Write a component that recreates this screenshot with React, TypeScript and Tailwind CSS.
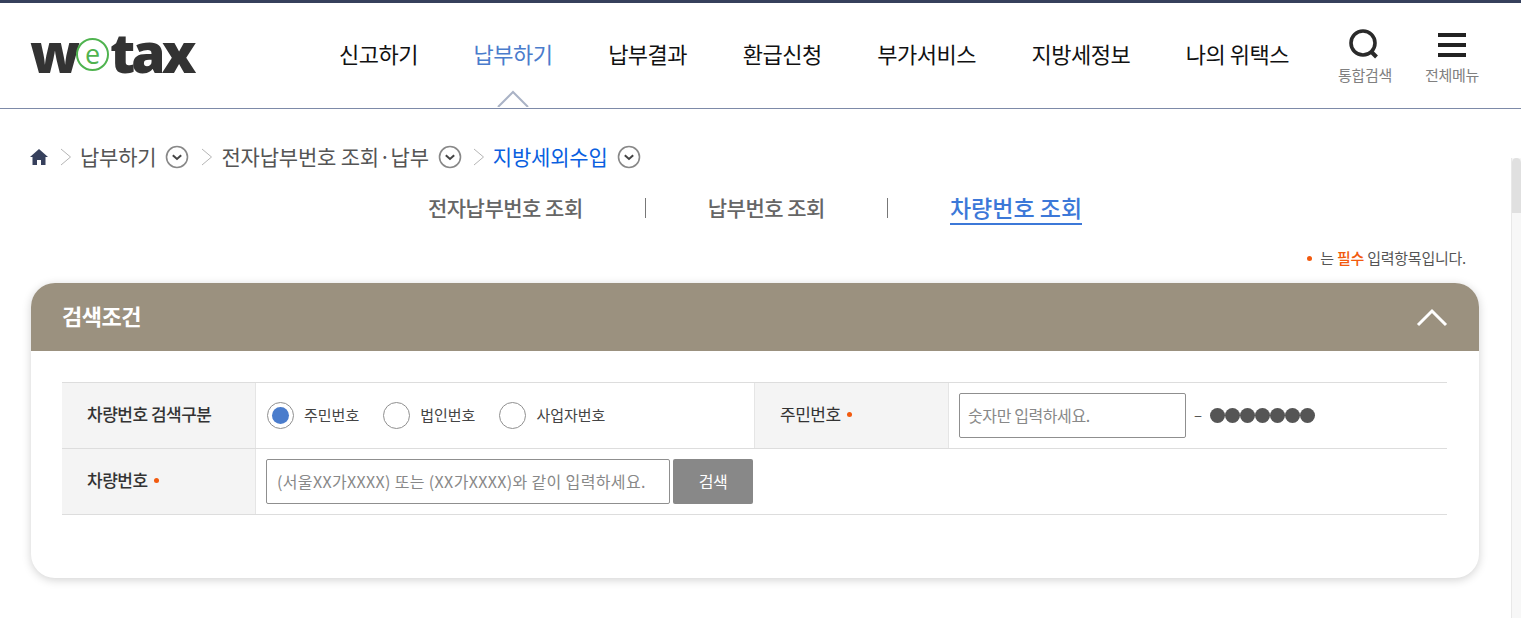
import React from 'react';

const font = "font-['Noto_Sans_CJK_KR','Noto_Sans',sans-serif]";

const menus = ['신고하기', '납부하기', '납부결과', '환급신청', '부가서비스', '지방세정보', '나의 위택스'];

const Circle: React.FC = () => (
  <svg width="24" height="24" viewBox="0 0 24 24" className="shrink-0">
    <circle cx="12" cy="12" r="10.5" fill="#fff" stroke="#888" strokeWidth="1.6" />
    <path d="M7.8 10.2 12 14l4.2-3.8" fill="none" stroke="#444" strokeWidth="2" />
  </svg>
);

const Sep: React.FC = () => (
  <svg width="12" height="18" viewBox="0 0 12 18" className="shrink-0">
    <path d="M1 1l9.5 8L1 17" fill="none" stroke="#b5b5b5" strokeWidth="1" />
  </svg>
);

const Dot: React.FC = () => <span className="inline-block w-[5px] h-[5px] rounded-full bg-[#f25a0e]" />;

const Radio: React.FC<{ label: string; checked?: boolean }> = ({ label, checked }) => (
  <label className="flex items-center gap-[10px]">
    <span className="w-[27px] h-[27px] rounded-full border border-[#8f8f8f] flex items-center justify-center">
      {checked && <span className="w-[17px] h-[17px] rounded-full bg-[#4a7ccc]" />}
    </span>
    <span className="text-[15px] text-[#444] tracking-normal">{label}</span>
  </label>
);

const App: React.FC = () => {
  return (
    <div className={`${font} h-[618px] overflow-hidden bg-white relative`}>
      <header className="h-[109px] border-t-[3px] border-[#36405c] border-b border-b-[#7d8aa8] relative flex">
        <div className="w-[310px] pl-[30px] pt-[20px]">
          <div className="flex items-center h-[56px] text-[#333] font-['Open_Sans'] font-extrabold text-[55px] leading-none tracking-[-3px]">
            <span>w</span>
            <span className="w-[33px] h-[33px] ml-[-1px] mr-[1px] mt-[7px] shrink-0 rounded-full border-2 border-[#4fb34f] bg-white flex items-center justify-center text-[#4fb34f] text-[27px] font-normal tracking-normal leading-[27px] pb-[3px]">e</span>
            <span className="tracking-[-4px]">tax</span>
          </div>
        </div>
        <nav className="flex gap-[55.6px] pt-[35px] text-[22px] leading-[30px] tracking-[-0.5px] text-[#111] ml-[29px]">
          {menus.map((m, i) => (
            <a key={m} className={i === 1 ? 'text-[#4a7ccc]' : ''}>{m}</a>
          ))}
        </nav>
        <div className="ml-auto mr-[42px] flex gap-[33px] pt-[26px]">
          <div className="w-[54px] flex flex-col items-center">
            <svg width="30" height="30" viewBox="0 0 30 30" className="mr-[2px]">
              <circle cx="14" cy="14" r="12" fill="none" stroke="#2a2a2a" strokeWidth="3.6" />
              <path d="M21.5 22l6 6" stroke="#2a2a2a" strokeWidth="4" />
            </svg>
            <span className="text-[15px] leading-[20px] mt-[6px] text-[#808080] tracking-[-0.3px] whitespace-nowrap">통합검색</span>
          </div>
          <div className="w-[54px] flex flex-col items-center">
            <div className="w-[28px] h-[30px] flex flex-col gap-[6px] pt-[4px]">
              <span className="h-[4px] bg-[#222]" />
              <span className="h-[4px] bg-[#222]" />
              <span className="h-[4px] bg-[#222]" />
            </div>
            <span className="text-[15px] leading-[20px] mt-[6px] text-[#808080] tracking-[-0.3px] whitespace-nowrap">전체메뉴</span>
          </div>
        </div>
        <svg width="32" height="18" viewBox="0 0 32 18" className="absolute left-[497px] top-[87px]">
          <path d="M1 17 16 2l15 15" fill="#fff" stroke="#aab3c6" strokeWidth="2" />
          <path d="M0 18h32" stroke="#fff" strokeWidth="2" />
        </svg>
      </header>

      <div className="flex items-center h-[24px] mt-[36px] pl-[30px] text-[21px] text-[#555] tracking-[-0.2px]">
        <svg width="18" height="16" viewBox="0 0 18 16" className="mr-[12px]">
          <path d="M9 0 0 8h2.5v8h4.5v-5h4v5h4.5V8H18z" fill="#36405c" />
        </svg>
        <Sep />
        <span className="ml-[8px] mr-[9px]">납부하기</span>
        <Circle />
        <span className="w-[12px] ml-[12px]"><Sep /></span>
        <span className="ml-[8px] mr-[9px]">전자납부번호 조회·납부</span>
        <Circle />
        <span className="w-[12px] ml-[11px]"><Sep /></span>
        <span className="ml-[8px] mr-[9px] text-[#0a5fe0]">지방세외수입</span>
        <Circle />
      </div>

      <div className="flex justify-center items-center h-[34px] mt-[22px] pr-[11px] text-[21px] text-[#666] tracking-[-0.5px] font-medium">
        <a className="mr-[62px]">전자납부번호 조회</a>
        <span className="w-px h-[20px] bg-[#777]" />
        <a className="mx-[62px]">납부번호 조회</a>
        <span className="w-px h-[20px] bg-[#777]" />
        <a className="ml-[62px] text-[23px] tracking-normal text-[#3c78d8] border-b-2 border-[#3c78d8] leading-[32px]">차량번호 조회</a>
      </div>

      <p className="flex justify-end items-center gap-[8px] mt-[23px] mr-[55px] text-[15px] leading-[20px] tracking-[-0.25px] text-[#555]">
        <Dot />
        <span>는 <b className="text-[#f25a0e] font-medium">필수</b> 입력항목입니다.</span>
      </p>

      <section className="mx-[31px] w-[1448px] mt-[15px] h-[295px] rounded-[24px] bg-white shadow-[0_2px_10px_rgba(0,0,0,0.18)] overflow-hidden">
        <div className="h-[68px] bg-[#9b917f] flex items-center justify-between pl-[31px] pr-[31px]">
          <h2 className="text-[22px] font-bold text-white tracking-[-0.5px] pb-[4px]">검색조건</h2>
          <svg width="32" height="20" viewBox="0 0 32 20">
            <path d="M2 18 16 4l14 14" fill="none" stroke="#fff" strokeWidth="3" />
          </svg>
        </div>
        <div className="ml-[31px] mr-[32px] mt-[31px] border-t border-[#ddd] text-[17px] tracking-[-0.5px]">
          <div className="flex h-[66px] border-b border-[#ddd]">
            <div className="w-[194px] bg-[#f4f4f4] border-r border-[#e5e5e5] pl-[25px] pb-[3px] flex items-center font-medium text-[#333]">차량번호 검색구분</div>
            <div className="w-[498px] pl-[11px] flex items-center gap-[24px]">
              <Radio label="주민번호" checked />
              <Radio label="법인번호" />
              <Radio label="사업자번호" />
            </div>
            <div className="w-[195px] bg-[#f4f4f4] border-x border-[#e5e5e5] pl-[25px] pb-[3px] flex items-center gap-[6px] text-[#333]">주민번호 <Dot /></div>
            <div className="flex-1 pl-[10px] flex items-center">
              <div className="w-[227px] h-[45px] border border-[#8f8f8f] rounded-[2px] pl-[8px] pb-[2px] flex items-center text-[16px] tracking-[-0.4px] text-[#888]">숫자만 입력하세요.</div>
              <span className="ml-[8px] text-[15px] text-[#555]">–</span>
              <div className="ml-[8px] flex">
                {[0, 1, 2, 3, 4, 5, 6].map(i => (
                  <span key={i} className="w-[15px] h-[15px] rounded-full bg-[#555]" />
                ))}
              </div>
            </div>
          </div>
          <div className="flex h-[66px] border-b border-[#ddd]">
            <div className="w-[194px] bg-[#f4f4f4] border-r border-[#e5e5e5] pl-[25px] pb-[3px] flex items-center gap-[6px] font-medium text-[#333]">차량번호 <Dot /></div>
            <div className="flex-1 pl-[10px] flex items-center gap-[3px]">
              <div className="w-[404px] h-[45px] border border-[#8f8f8f] rounded-[2px] pl-[10px] pb-[2px] flex items-center text-[16px] tracking-[0.35px] text-[#888] whitespace-nowrap">(서울XX가XXXX) 또는 (XX가XXXX)와 같이 입력하세요.</div>
              <button className="w-[80px] h-[45px] bg-[#888] rounded-[2px] pb-[2px] text-white text-[16px]">검색</button>
            </div>
          </div>
        </div>
      </section>

      <div className="absolute right-0 top-[158px] bottom-0 w-[10px] bg-[#f7f7f7] border-l border-[#e8e8e8]">
        <div className="h-[55px] bg-[#e0e0e0] rounded-t-[6px]" />
      </div>
    </div>
  );
};

export default App;
